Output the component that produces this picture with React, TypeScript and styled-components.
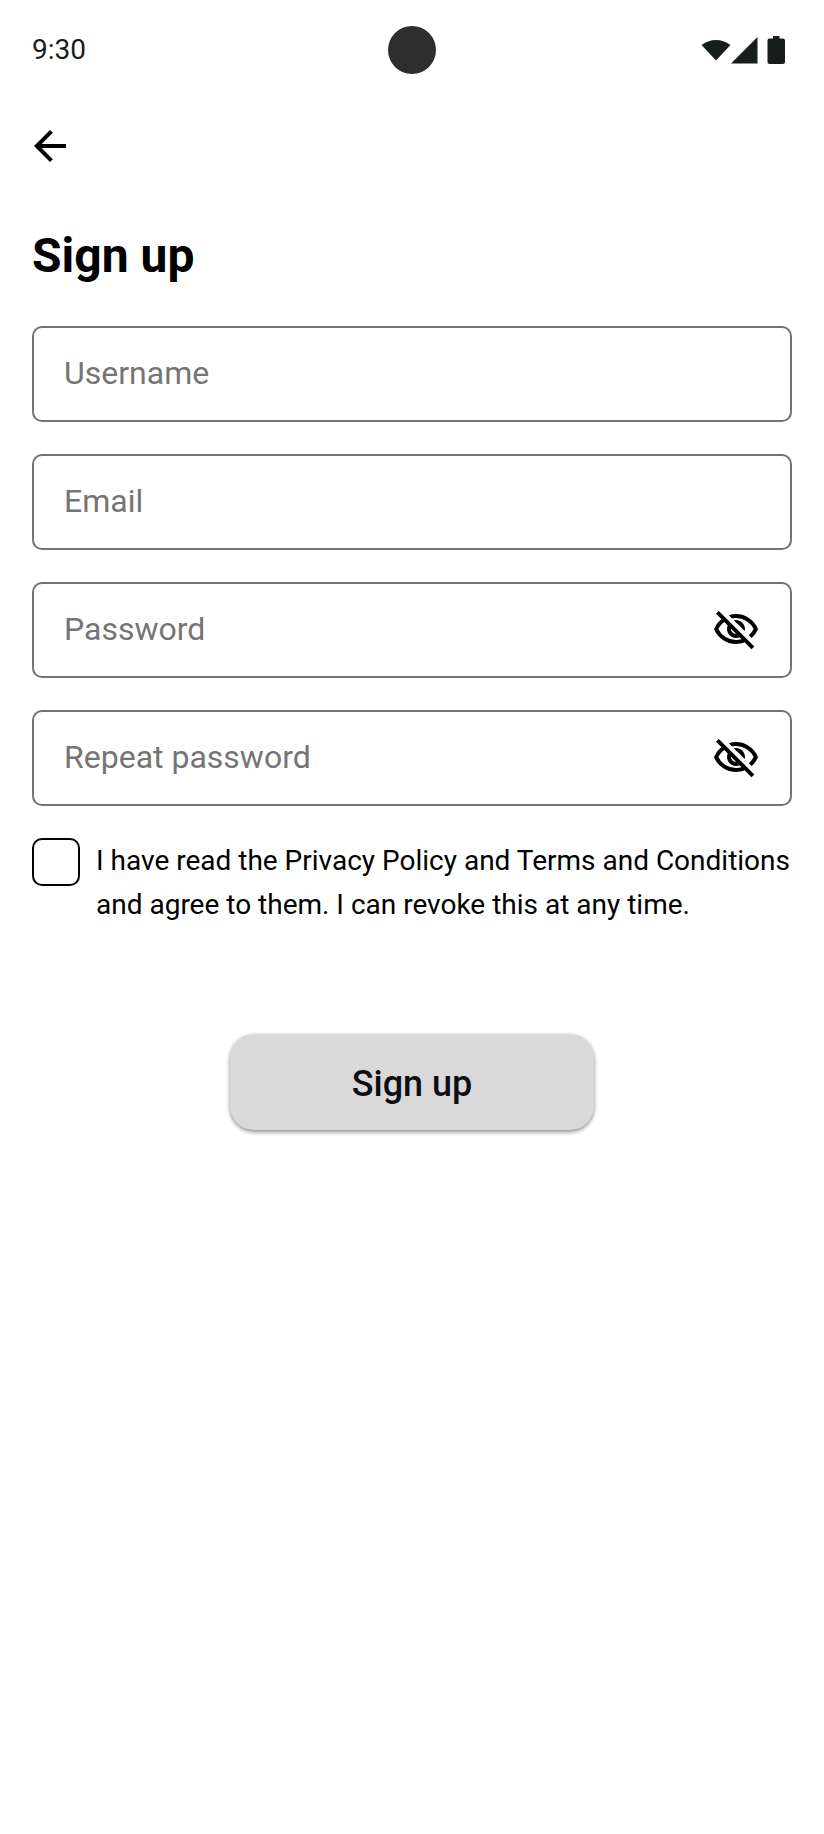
import React from "react";
import styled, { createGlobalStyle } from "styled-components";
import { MdOutlineVisibilityOff } from "react-icons/md";

const GlobalStyle = createGlobalStyle`
  *, *::before, *::after { box-sizing: border-box; }
  html, body { margin: 0; background: #fff; }
  body { font-family: Roboto, "Liberation Sans", sans-serif; color: #000; }
`;

const Screen = styled.div`
  min-height: 100vh;
  display: flex;
  flex-direction: column;
  background: #fff;
`;

const StatusBar = styled.header`
  display: grid;
  grid-template-columns: 1fr auto 1fr;
  align-items: center;
  height: 100px;
  padding: 0 32px;
  color: #171d1b;
`;

const Time = styled.time`
  font-size: 28px;
  line-height: 40px;
`;

const Camera = styled.span`
  width: 48px;
  height: 48px;
  border-radius: 50%;
  background: #2e2e2e;
`;

const StatusIcons = styled.svg`
  justify-self: end;
  display: block;
`;

const Main = styled.main`
  display: flex;
  flex-direction: column;
  padding: 22px 32px 32px;
`;

const IconButton = styled.button`
  display: flex;
  flex: none;
  padding: 0;
  border: 0;
  background: none;
  color: #000;
  cursor: pointer;
`;

const BackButton = styled(IconButton)`
  align-self: flex-start;
  margin-left: -6px;
`;

const Title = styled.h1`
  margin: 56px 0 40px;
  font-size: 48px;
  line-height: 60px;
  font-weight: 700;
`;

const Form = styled.form`
  display: flex;
  flex-direction: column;
  gap: 32px;
`;

const Field = styled.div`
  display: flex;
  align-items: center;
  height: 96px;
  padding: 0 30px;
  border: 2px solid #737373;
  border-radius: 10px;
`;

const Input = styled.input`
  flex: 1;
  min-width: 0;
  padding: 0 0 2px;
  border: 0;
  outline: 0;
  background: none;
  font: inherit;
  font-size: 32px;
  line-height: 40px;
  color: #000;
  &::placeholder { color: #757575; opacity: 1; }
`;

const Consent = styled.div`
  display: flex;
  align-items: flex-start;
  gap: 16px;
`;

const Checkbox = styled.input`
  appearance: none;
  flex: none;
  width: 48px;
  height: 48px;
  margin: 0;
  border: 2px solid #000;
  border-radius: 10px;
  background: #fff;
  &:checked { background: #000; box-shadow: inset 0 0 0 8px #fff; }
`;

const ConsentLabel = styled.label`
  padding-top: 1px;
  font-size: 28px;
  line-height: 44px;
`;

const SubmitButton = styled.button`
  align-self: center;
  width: 364px;
  max-width: 100%;
  height: 96px;
  margin-top: 75px;
  padding: 4px 0 0;
  border: 0;
  border-radius: 24px;
  background: #d9d9d9;
  box-shadow: 0 2px 4px rgba(0, 0, 0, 0.45);
  font: inherit;
  font-size: 36px;
  font-weight: 500;
  color: #0d0d12;
  cursor: pointer;
`;

const PasswordField = ({ label, name }: { label: string; name: string }) => {
  const [visible, setVisible] = React.useState(false);
  return (
    <Field>
      <Input type={visible ? "text" : "password"} name={name} placeholder={label} aria-label={label} />
      <IconButton type="button" aria-label={`Toggle ${label} visibility`} onClick={() => setVisible(!visible)}>
        <MdOutlineVisibilityOff size={48} aria-hidden="true" />
      </IconButton>
    </Field>
  );
};

export default function App() {
  return (
    <Screen>
      <GlobalStyle />
      <StatusBar>
        <Time>9:30</Time>
        <Camera />
        <StatusIcons width="92" height="32" viewBox="0 0 92 32" fill="currentColor" aria-hidden="true">
          <path d="M1.500 11Q16 1 30.500 11L16 26.500Z" />
          <path d="M31 29.500L57.500 3V29.500Z" />
          <path d="M73 2h6.500v2.500h3.500q2 0 2 2v21.500q0 2-2 2h-13.500q-2 0-2-2V6.500q0-2 2-2h3.500Z" />
        </StatusIcons>
      </StatusBar>
      <Main>
        <BackButton type="button" aria-label="Back">
          <svg width="48" height="48" viewBox="0 0 24 24" fill="currentColor" aria-hidden="true">
            <path d="M7.825 13L13.425 18.6L12 20L4 12L12 4L13.425 5.400L7.825 11H20V13Z" />
          </svg>
        </BackButton>
        <Title>Sign up</Title>
        <Form onSubmit={(e) => e.preventDefault()}>
          <Field><Input name="username" placeholder="Username" aria-label="Username" /></Field>
          <Field><Input type="email" name="email" placeholder="Email" aria-label="Email" /></Field>
          <PasswordField label="Password" name="password" />
          <PasswordField label="Repeat password" name="repeat" />
          <Consent>
            <Checkbox type="checkbox" id="consent" />
            <ConsentLabel htmlFor="consent">
              I have read the Privacy Policy and Terms and Conditions and agree to them. I can revoke this at any time.
            </ConsentLabel>
          </Consent>
          <SubmitButton type="submit">Sign up</SubmitButton>
        </Form>
      </Main>
    </Screen>
  );
}
